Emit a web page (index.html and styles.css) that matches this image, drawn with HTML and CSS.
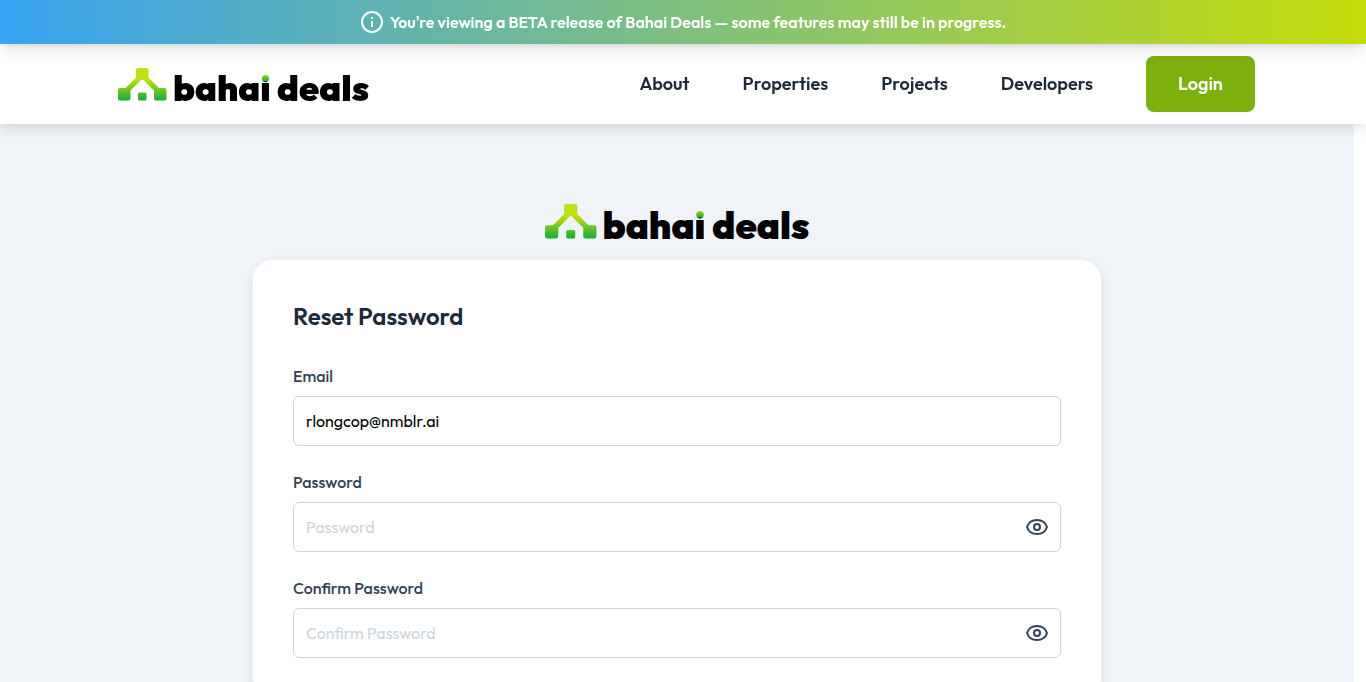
FILE: index.html
```html
<!DOCTYPE html>
<html lang="en">
<head>
<meta charset="utf-8">
<meta name="viewport" content="width=device-width, initial-scale=1">
<title>Reset Password | Bahai Deals</title>
<link rel="stylesheet" href="styles.css">
</head>
<body>
<svg class="defs" aria-hidden="true">
  <defs>
    <linearGradient id="leaf" gradientUnits="userSpaceOnUse" x1="0" y1="0" x2="0" y2="33">
      <stop offset="0" stop-color="#b5e61d"/>
      <stop offset="0.35" stop-color="#c3df0c"/>
      <stop offset="1" stop-color="#12aa3e"/>
    </linearGradient>
    <symbol id="house" viewBox="0 0 49 33">
      <g fill="url(#leaf)">
        <path d="M20 0H28.500Q30.500 0 30.500 2V9.500L41 20H46.500Q48.500 20 48.500 22V30.500Q48.500 32.500 46.500 32.500H38Q36 32.500 36 30.500V22.500L25.500 12Q24.250 10.800 23 12L12.500 22.500V30.500Q12.500 32.500 10.500 32.500H2Q0 32.500 0 30.500V22Q0 20 2 20H7.500L18 9.500V2Q18 0 20 0Z"/>
        <rect x="20" y="24.500" width="8.500" height="8" rx="1.500"/>
      </g>
    </symbol>
    <symbol id="eye" viewBox="0 0 24 24">
      <g fill="none" stroke="#334155" stroke-width="2">
        <path d="M2 12C3.500 7.500 7.300 5 12 5S20.500 7.500 22 12C20.500 16.500 16.700 19 12 19S3.500 16.500 2 12Z" stroke-linejoin="round"/>
        <circle cx="12" cy="12" r="3"/>
      </g>
    </symbol>
  </defs>
</svg>
<div class="banner" role="status">
  <svg class="banner-icon" viewBox="0 0 24 24" aria-hidden="true">
    <circle cx="12" cy="12" r="10" fill="none" stroke="#fff" stroke-width="2"/>
    <path d="M12 11v6M12 7v2" fill="none" stroke="#fff" stroke-width="2"/>
  </svg>
  <span>You're viewing a BETA release of Bahai Deals — some features may still be in progress.</span>
</div>
<header class="header">
  <a class="logo" href="#">
    <svg class="logo-mark" viewBox="0 0 49 33" aria-hidden="true"><use href="#house"/></svg>
    <span class="logo-text">baha<span class="logo-i">i</span> deals</span>
  </a>
  <nav class="nav">
    <a href="#">About</a>
    <a href="#">Properties</a>
    <a href="#">Projects</a>
    <a href="#">Developers</a>
    <button class="login" type="button">Login</button>
  </nav>
</header>
<main class="main">
  <a class="logo logo-large" href="#">
    <svg class="logo-mark" viewBox="0 0 49 33" aria-hidden="true"><use href="#house"/></svg>
    <span class="logo-text">baha<span class="logo-i">i</span> deals</span>
  </a>
  <form class="card">
    <h1 class="title">Reset Password</h1>
    <div class="field">
      <label for="email">Email</label>
      <input id="email" type="email" value="rlongcop@nmblr.ai">
    </div>
    <div class="field">
      <label for="password">Password</label>
      <div class="control">
        <input id="password" type="password" placeholder="Password">
        <button class="reveal" type="button" aria-label="Show password"><svg viewBox="0 0 24 24" aria-hidden="true"><use href="#eye"/></svg></button>
      </div>
    </div>
    <div class="field">
      <label for="confirm">Confirm Password</label>
      <div class="control">
        <input id="confirm" type="password" placeholder="Confirm Password">
        <button class="reveal" type="button" aria-label="Show confirmed password"><svg viewBox="0 0 24 24" aria-hidden="true"><use href="#eye"/></svg></button>
      </div>
    </div>
  </form>
</main>
</body>
</html>
```
FILE: styles.css
```css
* { box-sizing: border-box; }

body {
  margin: 0;
  height: 100vh;
  display: flex;
  flex-direction: column;
  overflow: hidden;
  background: #fff;
  color: #1e293b;
  font: 16px/24px Outfit, Lato, sans-serif;
}

a { color: inherit; text-decoration: none; }
button, input { font: inherit; }

.defs { position: absolute; width: 0; height: 0; }

.banner {
  z-index: 3;
  flex: none;
  display: flex;
  align-items: center;
  justify-content: center;
  gap: 6px;
  padding: 10px 16px;
  background: linear-gradient(90deg, #38a3f1, #c5dc0b);
  color: #fff;
  font-weight: 600;
  box-shadow: 0 10px 15px -3px rgba(0, 0, 0, 0.1), 0 4px 6px -4px rgba(0, 0, 0, 0.1);
}
.banner-icon { width: 24px; height: 24px; }

.header {
  z-index: 2;
  flex: none;
  display: flex;
  align-items: center;
  justify-content: space-between;
  padding: 12px 111px 12px 118px;
  background: #fff;
  box-shadow: 0 4px 12px rgba(0, 0, 0, 0.13);
}

.nav {
  display: flex;
  align-items: center;
  gap: 53px;
  font-size: 18px;
  line-height: 28px;
  font-weight: 600;
}

.login {
  height: 56px;
  padding: 0 32px;
  border: 0;
  border-radius: 8px;
  background: #7cb00d;
  color: #fff;
}

.logo { display: flex; align-items: baseline; gap: 6px; }
.logo-mark { width: 49px; height: 33px; }
.logo-text {
  color: #000;
  font-size: 36px;
  line-height: 24px;
  font-weight: 900;
}
.logo-i {
  background: linear-gradient(#c3df0c 8px, #22b13a 16px, #000 17px);
  -webkit-background-clip: text;
  background-clip: text;
  color: transparent;
}
.logo-large .logo-mark { width: 52px; height: 35px; }
.logo-large .logo-text { font-size: 38px; }

.main {
  flex: 1;
  min-height: 0;
  margin-right: 12px;
  padding: 80px 24px;
  display: flex;
  flex-direction: column;
  align-items: center;
  gap: 21px;
  overflow-y: auto;
  scrollbar-width: none;
  background: #f0f4f9;
}

.card {
  flex: none;
  width: 100%;
  max-width: 848px;
  display: flex;
  flex-direction: column;
  gap: 24px;
  padding: 40px;
  border-radius: 20px;
  background: #fff;
  box-shadow: 0 0 0 1px #edf1f6, 0 4px 12px rgba(30, 41, 59, 0.12);
}
.title {
  margin: 0 0 8px;
  font-size: 24px;
  line-height: 32px;
  font-weight: 600;
}

.field { display: flex; flex-direction: column; gap: 8px; }
.field label { color: #334155; font-weight: 500; }
.field input {
  width: 100%;
  height: 50px;
  padding: 0 12px;
  border: 1px solid #cbd5e1;
  border-radius: 6px;
  background: #fff;
  color: #000;
}
.field input::placeholder { color: #cbd5e1; opacity: 1; }

.control { position: relative; }
.control input { padding-right: 48px; }
.reveal {
  position: absolute;
  top: 13px;
  right: 12px;
  width: 24px;
  height: 24px;
  padding: 0;
  border: 0;
  background: none;
}
.reveal svg { display: block; width: 24px; height: 24px; }
```
